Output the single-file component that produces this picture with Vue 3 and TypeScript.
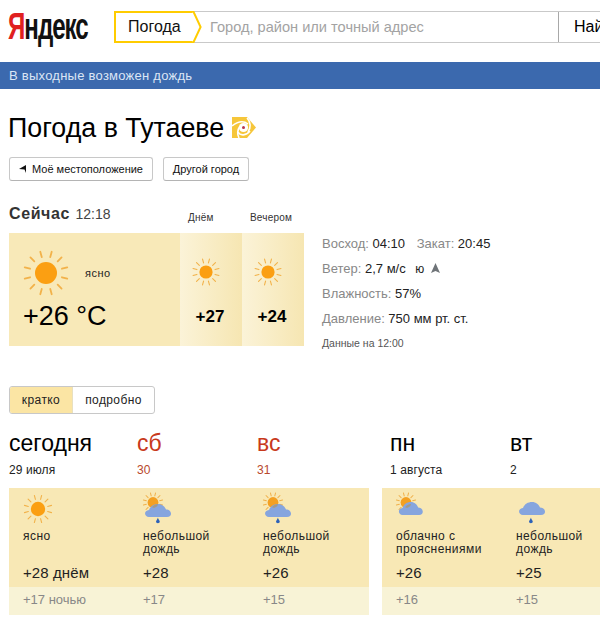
<script setup lang="ts">
interface Day {
  name: string
  date: string
  weekend: boolean
  cond: string[]
  icon: 'sun' | 'partrain' | 'partcloud' | 'rain'
  high: string
  low: string
  cls: string
}
const days: Day[] = [
  { name: 'сегодня', date: '29 июля', weekend: false, cond: ['ясно'], icon: 'sun', high: '+28 днём', low: '+17 ночью', cls: 'c1' },
  { name: 'сб', date: '30', weekend: true, cond: ['небольшой', 'дождь'], icon: 'partrain', high: '+28', low: '+17', cls: 'c2' },
  { name: 'вс', date: '31', weekend: true, cond: ['небольшой', 'дождь'], icon: 'partrain', high: '+26', low: '+15', cls: 'c3' },
  { name: 'пн', date: '1 августа', weekend: false, cond: ['облачно с', 'прояснениями'], icon: 'partcloud', high: '+26', low: '+16', cls: 'c4' },
  { name: 'вт', date: '2', weekend: false, cond: ['небольшой', 'дождь'], icon: 'rain', high: '+25', low: '+15', cls: 'c5' }
]
const rays = Array.from({ length: 12 }, (_, i) => i * 30 + 15)
const cloud = 'M6 23 C1 23 0.5 16.5 6 16 C7.5 12 11 10 15 10 C19 10 22 12.5 23 15.5 C29 15.5 30 23 24 23 Z'
</script>

<template>
  <div class="page">
    <header class="top">
      <div class="logo"><span class="logo-y">Я</span>ндекс</div>
      <div class="search">
        <div class="tab">
          Погода
          <svg class="tab-arrow" width="10" height="32" viewBox="0 0 10 32">
            <path d="M0 0.8 H1.5 L8.6 16 L1.5 31.2 H0" fill="#fff" stroke="#fc0" stroke-width="2" />
          </svg>
        </div>
        <div class="placeholder">Город, район или точный адрес</div>
        <div class="find">Найти</div>
      </div>
    </header>

    <div class="notice">В выходные возможен дождь</div>

    <h1 class="title">
      Погода в Тутаеве
      <svg class="swirl" width="25" height="22" viewBox="0 0 25 22">
        <path d="M0 0 H15 L24 10.5 L15 21 H0 Z" fill="#f6c63a" />
        <path d="M0 9 C5 5 11 3 16 7" fill="none" stroke="#fff" stroke-width="1.6" />
        <path d="M15 1 C19 5 19 11 16 15" fill="none" stroke="#fff" stroke-width="1.6" />
        <path d="M18 14 C14 19 8 19 6 15" fill="none" stroke="#fff" stroke-width="1.6" />
        <path d="M7 21 C5 17 6 12 8 9" fill="none" stroke="#fff" stroke-width="1.6" />
        <circle cx="11.5" cy="10.5" r="4.6" fill="#fff" />
        <circle cx="11.5" cy="10.5" r="1.5" fill="#b8344a" />
      </svg>
    </h1>

    <div class="actions">
      <button class="btn btn-loc">
        <svg width="8" height="8" viewBox="0 0 8 8"><path d="M0 4 L7 0 V8 L5.5 4.6 Z" fill="#111" /></svg>
        Моё местоположение
      </button>
      <button class="btn btn-city">Другой город</button>
    </div>

    <section class="now">
      <div class="now-left">
        <div class="now-heads">
          <div class="now-head"><b>Сейчас</b> <span>12:18</span></div>
          <div class="part-head">Днём</div>
          <div class="part-head">Вечером</div>
        </div>
        <div class="now-panels">
          <div class="now-main">
            <div class="now-cond">
              <svg width="46" height="46" viewBox="0 0 46 46">
                <circle cx="23" cy="23" r="11" fill="#fb9f12" />
                <line v-for="r in rays" :key="r" x1="23" y1="6.5" x2="23" y2="1" stroke="#f2b24a" stroke-width="1.8" stroke-linecap="round" :transform="`rotate(${r} 23 23)`" />
              </svg>
              <span class="now-text">ясно</span>
            </div>
            <div class="now-temp">+26 <span class="deg">°C</span></div>
          </div>
          <div class="part">
            <svg width="28" height="28" viewBox="0 0 28 28">
              <circle cx="14" cy="14" r="6.6" fill="#fb9f12" />
              <line v-for="r in rays" :key="r" x1="14" y1="4.6" x2="14" y2="0.6" stroke="#f2b24a" stroke-width="1.1" stroke-linecap="round" :transform="`rotate(${r} 14 14)`" />
            </svg>
            <div class="part-temp">+27</div>
          </div>
          <div class="part">
            <svg width="28" height="28" viewBox="0 0 28 28">
              <circle cx="14" cy="14" r="6.6" fill="#fb9f12" />
              <line v-for="r in rays" :key="r" x1="14" y1="4.6" x2="14" y2="0.6" stroke="#f2b24a" stroke-width="1.1" stroke-linecap="round" :transform="`rotate(${r} 14 14)`" />
            </svg>
            <div class="part-temp">+24</div>
          </div>
        </div>
      </div>
      <div class="facts">
        <div class="fact"><i>Восход:</i> 04:10 <i class="gap">Закат:</i> 20:45</div>
        <div class="fact"><i>Ветер:</i> 2,7 м/с <span class="wind">ю</span>
          <svg class="wind-arrow" width="9" height="10" viewBox="0 0 9 10"><path d="M4.5 0 L9 10 L4.5 8 L0 10 Z" fill="#6f7478" /></svg>
        </div>
        <div class="fact"><i>Влажность:</i> 57%</div>
        <div class="fact"><i>Давление:</i> 750 мм рт. ст.</div>
        <div class="fact stamp">Данные на 12:00</div>
      </div>
    </section>

    <div class="toggle">
      <span class="toggle-on">кратко</span>
      <span class="toggle-off">подробно</span>
    </div>

    <section class="forecast">
      <div v-for="d in days" :key="d.name" class="day" :class="[d.cls, { weekend: d.weekend }]">
        <div class="day-head">
          <div class="day-name">{{ d.name }}</div>
          <div class="day-date">{{ d.date }}</div>
        </div>
        <div class="day-top">
          <svg class="day-icon" width="34" height="34" viewBox="0 0 34 34">
            <template v-if="d.icon === 'sun'">
              <circle cx="15" cy="15" r="7.2" fill="#fb9f12" />
              <line v-for="r in rays" :key="r" x1="15" y1="5" x2="15" y2="1" stroke="#f2b24a" stroke-width="1.1" stroke-linecap="round" :transform="`rotate(${r} 15 15)`" />
            </template>
            <template v-if="d.icon === 'partrain' || d.icon === 'partcloud'">
              <circle cx="10" cy="8.5" r="5.4" fill="#f3a022" />
              <line v-for="r in rays" :key="r" x1="10" y1="1.6" x2="10" y2="-1.4" stroke="#f0b04a" stroke-width="1" stroke-linecap="round" :transform="`rotate(${r} 10 8.5)`" />
              <path :d="cloud" fill="#86a5de" :transform="d.icon === 'partcloud' ? 'translate(1 -2) scale(.92 1)' : undefined" />
              <path d="M9.5 12.6 C11 10.9 13 10.2 15 10 L14.8 11 C14 13 12 14 9.5 13.8 Z" fill="#a19a8a" />
            </template>
            <path v-if="d.icon === 'rain'" :d="cloud" fill="#86a5de" transform="translate(1 -2)" />
            <path v-if="d.icon === 'partrain' || d.icon === 'rain'" d="M15 23.5 C15 25.5 16.8 26 16.8 27.8 C16.8 29.6 13 29.6 13 27.8 C13 26.6 14.4 25.5 15 23.5 Z" fill="#2d62b8" />
          </svg>
          <div class="day-cond"><div v-for="l in d.cond" :key="l">{{ l }}</div></div>
          <div class="day-high">{{ d.high }}</div>
        </div>
        <div class="day-low">{{ d.low }}</div>
      </div>
    </section>
  </div>
</template>

<style>
html, body { margin: 0; background: #fff; overflow: hidden; }
</style>

<style scoped>
.page {
  width: 600px;
  height: 635px;
  overflow: hidden;
  font-family: "Liberation Sans", Arial, sans-serif;
  color: #000;
}
.top {
  display: flex;
  height: 62px;
  box-sizing: border-box;
  padding: 11px 0 0 8px;
}
.logo {
  width: 106px;
  flex: none;
  font-size: 36px;
  font-weight: 700;
  line-height: 32px;
  letter-spacing: -1.5px;
  color: #111;
  transform: scaleX(.67);
  transform-origin: 0 50%;
  white-space: nowrap;
}
.logo-y { color: #e02020; }
.search {
  display: flex;
  flex: none;
  width: 500px;
  height: 32px;
  box-sizing: border-box;
  border: 1px solid #c9c9c9;
  border-left: 0;
  border-right: 0;
  font-size: 16px;
  line-height: 30px;
}
.tab {
  position: relative;
  flex: none;
  width: 78px;
  height: 32px;
  margin-top: -1px;
  box-sizing: border-box;
  border: 2px solid #fc0;
  border-right: 0;
  padding-left: 12px;
  line-height: 28px;
  color: #111;
}
.tab-arrow { position: absolute; left: 76px; top: -2px; }
.placeholder {
  flex: none;
  width: 348px;
  margin-left: 18px;
  font-size: 14.6px;
  color: #a3a3a3;
}
.find {
  flex: none;
  height: 30px;
  border-left: 1px solid #a8a8a8;
  padding-left: 15px;
  white-space: nowrap;
}
.notice {
  height: 27px;
  padding-left: 9px;
  background: #3b69ae;
  color: #dbe6f5;
  font-size: 13px;
  line-height: 27px;
  letter-spacing: .25px;
}
.title {
  display: flex;
  align-items: center;
  gap: 8px;
  margin: 23px 0 0 8px;
  height: 32px;
  font-size: 26.8px;
  line-height: 32px;
  font-weight: 400;
}
.actions {
  display: flex;
  gap: 10px;
  margin: 13px 0 0 9px;
}
.btn {
  display: flex;
  align-items: center;
  justify-content: center;
  gap: 5px;
  height: 24px;
  padding: 0;
  background: #fff;
  border: 1px solid #c8c8c8;
  border-bottom-color: #b4b4b4;
  border-radius: 3px;
  font: 11px/22px "Liberation Sans", Arial, sans-serif;
  color: #111;
}
.btn-loc { width: 144px; }
.btn-city { width: 86px; }
.now {
  display: flex;
  margin: 23px 0 0 9px;
}
.now-left { flex: none; width: 295px; }
.now-heads { display: flex; height: 29px; }
.now-head {
  width: 171px;
  font-size: 16px;
  line-height: 20px;
  white-space: nowrap;
}
.now-head b { color: #333; letter-spacing: .6px; }
.now-head span { font-size: 14px; color: #444; margin-left: 1px; }
.part-head {
  width: 62px;
  box-sizing: border-box;
  padding: 7px 0 0 8px;
  font-size: 10px;
  line-height: 14px;
  letter-spacing: .2px;
  color: #333;
}
.now-panels { display: flex; height: 113px; }
.now-main {
  width: 171px;
  flex: none;
  box-sizing: border-box;
  padding: 17px 0 0 14px;
  background: #f8e9b8;
}
.now-cond { display: flex; align-items: center; height: 46px; }
.now-text { margin-left: 16px; font-size: 11px; letter-spacing: .5px; color: #222; }
.now-temp { margin-top: 3px; font-size: 27px; line-height: 34px; white-space: nowrap; }
.deg { font-size: 27px; }
.part {
  width: 62px;
  flex: none;
  box-sizing: border-box;
  padding-top: 25px;
  text-align: center;
  background: linear-gradient(90deg, #fbf3d8, #f6e6b2);
}
.part svg { display: block; margin-left: 12px; }
.part-temp { margin-top: 21px; font-size: 17px; line-height: 20px; font-weight: 700; padding-right: 2px; }
.facts {
  flex: none;
  margin: 27px 0 0 18px;
  font-size: 13px;
}
.fact { height: 25px; line-height: 25px; white-space: nowrap; color: #222; }
.fact i { font-style: normal; color: #888; }
.fact .gap { margin-left: 8px; }
.wind { margin-left: 6px; font-size: 12px; }
.wind-arrow { margin-left: 7px; }
.stamp { font-size: 10.5px; color: #555; }
.toggle {
  display: flex;
  width: 146px;
  height: 28px;
  box-sizing: border-box;
  margin: 30px 0 0 9px;
  border: 1px solid #c8c8c8;
  border-radius: 3px;
  font-size: 12px;
  line-height: 26px;
  letter-spacing: .4px;
  text-align: center;
  overflow: hidden;
}
.toggle-on { flex: none; width: 63px; background: #fbe5a4; color: #222; border-right: 1px solid #e8e0c0; box-sizing: border-box; }
.toggle-off { flex: 1; color: #222; }
.forecast { display: flex; margin: 17px 0 0 9px; }
.day { flex: none; }
.c1 { width: 128px; }
.c2 { width: 120px; }
.c3 { width: 112px; margin-right: 13px; }
.c4 { width: 128px; }
.c5 { width: 120px; }
.day-head { height: 57px; }
.c4 .day-head { padding-left: 8px; }
.day-name { font-size: 23px; line-height: 24px; height: 31px; }
.day-date { font-size: 12px; line-height: 16px; letter-spacing: .1px; color: #222; }
.weekend .day-name { color: #c8391c; }
.weekend .day-date { color: #b8492c; }
.day-top {
  height: 99px;
  box-sizing: border-box;
  padding: 6px 0 0 6px;
  background: #f8e8b5;
  font-size: 12px;
}
.c1 .day-top, .c4 .day-top { padding-left: 14px; }
.day-icon { display: block; height: 34px; overflow: visible; }
.day-cond {
  height: 35px;
  padding-top: 2px;
  box-sizing: border-box;
  line-height: 13px;
  letter-spacing: .45px;
  color: #222;
}
.day-high { font-size: 15px; line-height: 18px; letter-spacing: .1px; margin-top: 1px; color: #222; }
.day-low {
  height: 28px;
  padding-left: 6px;
  background: #f8f3d6;
  color: #888;
  font-size: 13px;
  line-height: 25px;
}
.c1 .day-low, .c4 .day-low { padding-left: 14px; }
</style>
